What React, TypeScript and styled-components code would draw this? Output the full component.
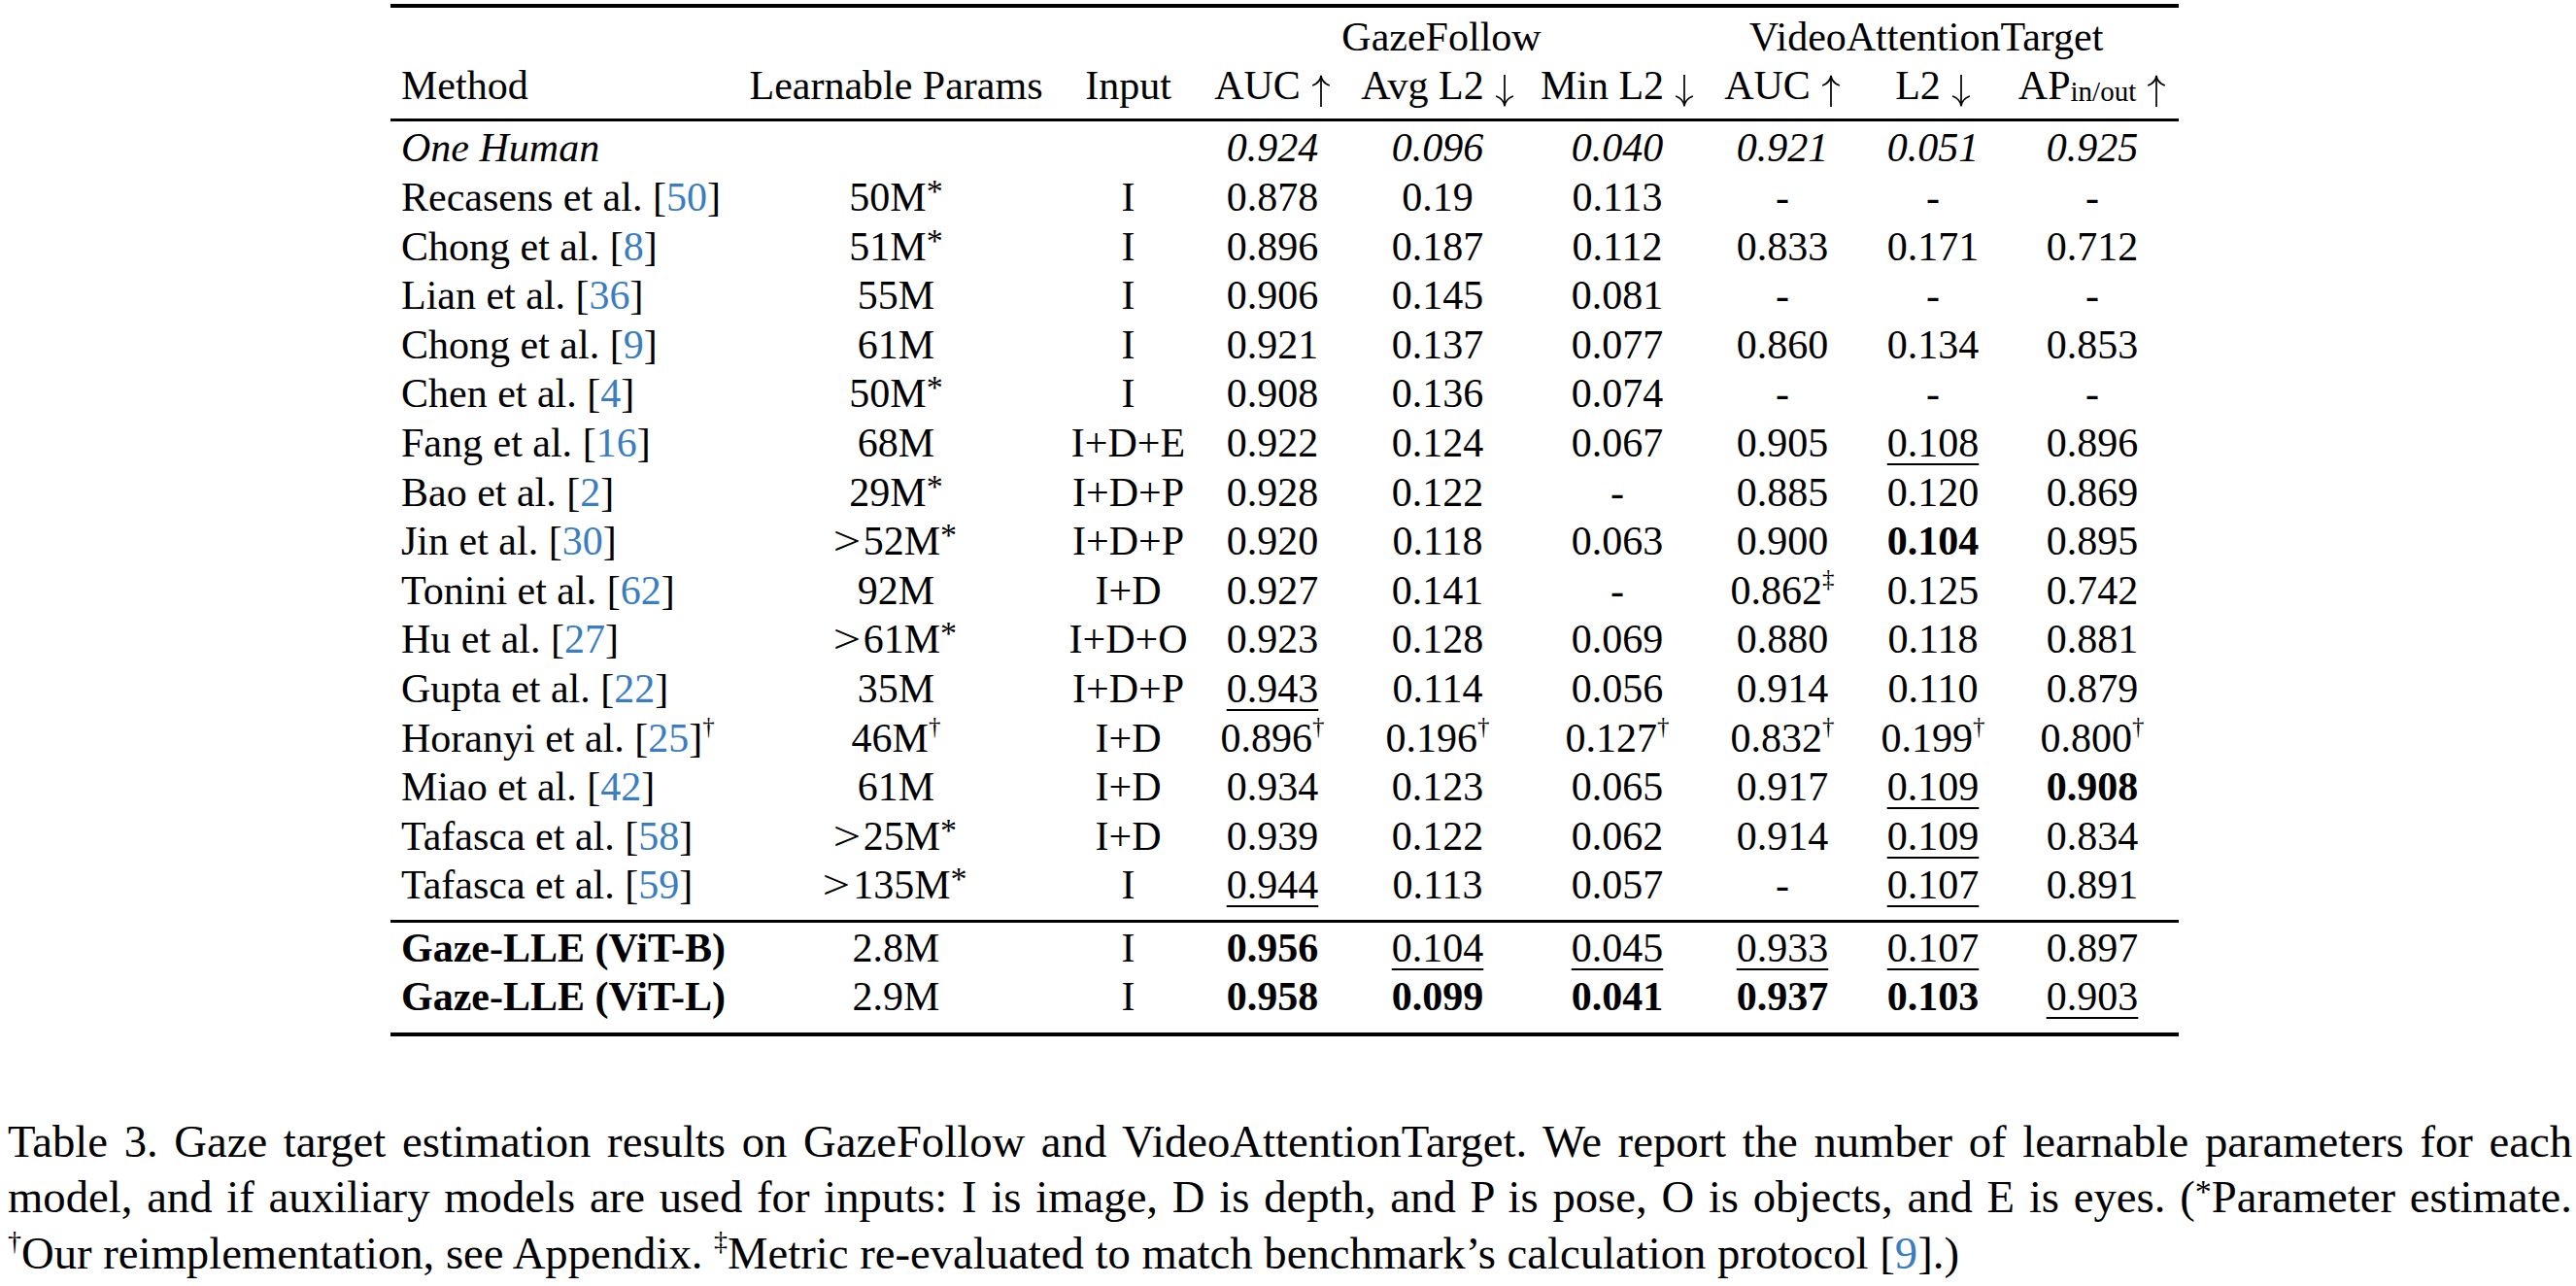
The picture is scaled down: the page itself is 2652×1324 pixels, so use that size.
import React from 'react';
import styled, { createGlobalStyle } from 'styled-components';

const GlobalStyle = createGlobalStyle`
  html, body {
    margin: 0;
    padding: 0;
    background: #ffffff;
  }
  body {
    font-family: "Liberation Serif", "Times New Roman", serif;
    color: #000000;
    overflow: hidden;
  }
`;

const Page = styled.div`
  width: 2652px;
  box-sizing: border-box;
  padding: 4px 0 0 8px;
`;

const Table = styled.table`
  margin-left: 394px;
  width: 1841px;
  table-layout: fixed;
  border-collapse: separate;
  border-spacing: 0;
  font-size: 42px;
  line-height: 50.6px;
`;

type Edge = { ruleTop?: number; padTop?: number; padBottom?: number; ruleBottom?: number };

const Cell = styled.td<{ $left?: boolean; $edge?: Edge; $italic?: boolean; $bold?: boolean; $shift?: number }>`
  padding: ${({ $edge }) => $edge?.padTop ?? 0}px ${({ $shift }) => $shift ?? 0}px
    ${({ $edge }) => $edge?.padBottom ?? 0}px ${({ $left }) => ($left ? 11 : 0)}px;
  text-align: ${({ $left }) => ($left ? 'left' : 'center')};
  vertical-align: top;
  white-space: nowrap;
  border-top: ${({ $edge }) => ($edge?.ruleTop ? `${$edge.ruleTop}px solid #000` : 'none')};
  border-bottom: ${({ $edge }) => ($edge?.ruleBottom ? `${$edge.ruleBottom}px solid #000` : 'none')};
  font-style: ${({ $italic }) => ($italic ? 'italic' : 'normal')};
  font-weight: ${({ $bold }) => ($bold ? 700 : 400)};
`;

const Cite = styled.span`
  color: #3a7dc0;
`;

const Sup = styled.span<{ $size?: number; $raise?: number }>`
  font-size: ${({ $size }) => $size ?? 26}px;
  vertical-align: ${({ $raise }) => $raise ?? 17}px;
  line-height: 0;
  font-weight: 400;
  font-style: normal;
`;

const Sub = styled.span`
  font-size: 29px;
  vertical-align: -2px;
  line-height: 0;
`;

// the math arrows (\uparrow, \downarrow): thin stem, curved barbs, dropping below the baseline
const ArrowSvg = styled.svg<{ $down?: boolean }>`
  display: inline-block;
  width: 20px;
  height: 33px;
  margin-left: 11px;
  vertical-align: -8px;
  transform: ${({ $down }) => ($down ? 'scaleY(-1)' : 'none')};
`;

const Arrow = ({ down }: { down?: boolean }) => (
  <ArrowSvg $down={down} viewBox="0 0 20 33" fill="none" stroke="#000" strokeWidth={1.7} strokeLinecap="round">
    <path d="M10 1.5 V33" />
    <path d="M10 1.5 C9.2 5.5 6.2 9 1.8 10.8" />
    <path d="M10 1.5 C10.8 5.5 13.8 9 18.2 10.8" />
  </ArrowSvg>
);

const Gt = styled.span`
  display: inline-block;
  margin-right: 5px;
  transform: scaleX(1.2);
`;

const Under = styled.span`
  text-decoration: underline;
  text-decoration-thickness: 2px;
  text-underline-offset: 7px;
`;

const Strong = styled.span`
  font-weight: 700;
`;

const Caption = styled.div`
  margin-top: 80px;
  width: 2640px;
  font-size: 46.7px;
  line-height: 57.5px;
`;

const CaptionLine = styled.div<{ $last?: boolean }>`
  white-space: nowrap;
  text-align: ${({ $last }) => ($last ? 'left' : 'justify')};
  text-align-last: ${({ $last }) => ($last ? 'left' : 'justify')};
`;

const widths = [355, 331, 147, 150, 190, 180, 160, 150, 178];

type Method = { name: string; ref?: string; dagger?: boolean };
type Row = { method: Method; params: string; input: string; vals: string[] };

const rows: Row[] = [
  { method: { name: 'Recasens et al.', ref: '50' }, params: '50M*', input: 'I', vals: ['0.878', '0.19', '0.113', '-', '-', '-'] },
  { method: { name: 'Chong et al.', ref: '8' }, params: '51M*', input: 'I', vals: ['0.896', '0.187', '0.112', '0.833', '0.171', '0.712'] },
  { method: { name: 'Lian et al.', ref: '36' }, params: '55M', input: 'I', vals: ['0.906', '0.145', '0.081', '-', '-', '-'] },
  { method: { name: 'Chong et al.', ref: '9' }, params: '61M', input: 'I', vals: ['0.921', '0.137', '0.077', '0.860', '0.134', '0.853'] },
  { method: { name: 'Chen et al.', ref: '4' }, params: '50M*', input: 'I', vals: ['0.908', '0.136', '0.074', '-', '-', '-'] },
  { method: { name: 'Fang et al.', ref: '16' }, params: '68M', input: 'I+D+E', vals: ['0.922', '0.124', '0.067', '0.905', '_0.108', '0.896'] },
  { method: { name: 'Bao et al.', ref: '2' }, params: '29M*', input: 'I+D+P', vals: ['0.928', '0.122', '-', '0.885', '0.120', '0.869'] },
  { method: { name: 'Jin et al.', ref: '30' }, params: '>52M*', input: 'I+D+P', vals: ['0.920', '0.118', '0.063', '0.900', '!0.104', '0.895'] },
  { method: { name: 'Tonini et al.', ref: '62' }, params: '92M', input: 'I+D', vals: ['0.927', '0.141', '-', '0.862‡', '0.125', '0.742'] },
  { method: { name: 'Hu et al.', ref: '27' }, params: '>61M*', input: 'I+D+O', vals: ['0.923', '0.128', '0.069', '0.880', '0.118', '0.881'] },
  { method: { name: 'Gupta et al.', ref: '22' }, params: '35M', input: 'I+D+P', vals: ['_0.943', '0.114', '0.056', '0.914', '0.110', '0.879'] },
  { method: { name: 'Horanyi et al.', ref: '25', dagger: true }, params: '46M†', input: 'I+D', vals: ['0.896†', '0.196†', '0.127†', '0.832†', '0.199†', '0.800†'] },
  { method: { name: 'Miao et al.', ref: '42' }, params: '61M', input: 'I+D', vals: ['0.934', '0.123', '0.065', '0.917', '_0.109', '!0.908'] },
  { method: { name: 'Tafasca et al.', ref: '58' }, params: '>25M*', input: 'I+D', vals: ['0.939', '0.122', '0.062', '0.914', '_0.109', '0.834'] },
  { method: { name: 'Tafasca et al.', ref: '59' }, params: '>135M*', input: 'I', vals: ['_0.944', '0.113', '0.057', '-', '_0.107', '0.891'] },
];

const ours: Row[] = [
  { method: { name: 'Gaze-LLE (ViT-B)' }, params: '2.8M', input: 'I', vals: ['!0.956', '_0.104', '_0.045', '_0.933', '_0.107', '0.897'] },
  { method: { name: 'Gaze-LLE (ViT-L)' }, params: '2.9M', input: 'I', vals: ['!0.958', '!0.099', '!0.041', '!0.937', '!0.103', '_0.903'] },
];

const withMark = (s: string) => {
  const last = s.slice(-1);
  if (last === '†' || last === '‡') {
    return (
      <>
        {s.slice(0, -1)}
        <Sup $size={25} $raise={18}>{last}</Sup>
      </>
    );
  }
  if (last === '*') {
    return (
      <>
        {s.slice(0, -1)}
        <Sup $size={34} $raise={9}>*</Sup>
      </>
    );
  }
  return <>{s}</>;
};

const Value = ({ s }: { s: string }) => {
  if (s.startsWith('_')) return <Under>{withMark(s.slice(1))}</Under>;
  if (s.startsWith('!')) return <Strong>{withMark(s.slice(1))}</Strong>;
  return withMark(s);
};

const Params = ({ s }: { s: string }) =>
  s.startsWith('>') ? (
    <>
      <Gt>&gt;</Gt>
      {withMark(s.slice(1))}
    </>
  ) : (
    withMark(s)
  );

const MethodName = ({ m }: { m: Method }) => (
  <>
    {m.name}
    {m.ref && (
      <>
        {' ['}
        <Cite>{m.ref}</Cite>]
      </>
    )}
    {m.dagger && (
      <Sup $size={25} $raise={18}>
        †
      </Sup>
    )}
  </>
);

const DataRow = ({ row, edge, bold }: { row: Row; edge?: Edge; bold?: boolean }) => (
  <tr>
    <Cell $left $edge={edge} $bold={bold}>
      <MethodName m={row.method} />
    </Cell>
    <Cell $edge={edge}>
      <Params s={row.params} />
    </Cell>
    <Cell $edge={edge}>{row.input}</Cell>
    {row.vals.map((v, i) => (
      <Cell key={i} $edge={edge}>
        <Value s={v} />
      </Cell>
    ))}
  </tr>
);

export default function App() {
  const groupEdge: Edge = { ruleTop: 4, padTop: 4.5 };
  const headEdge: Edge = { padBottom: 8.3 };
  const lastBase = rows.length - 1;
  const human: Edge = { ruleTop: 3, padTop: 2.5 };

  return (
    <Page>
      <GlobalStyle />
      <Table>
        <colgroup>
          {widths.map((w, i) => (
            <col key={i} style={{ width: w }} />
          ))}
        </colgroup>
        <thead>
          <tr>
            <Cell $edge={groupEdge} />
            <Cell $edge={groupEdge} />
            <Cell $edge={groupEdge} />
            <Cell colSpan={3} $edge={groupEdge} $shift={22}>
              GazeFollow
            </Cell>
            <Cell colSpan={3} $edge={groupEdge} $shift={32}>
              VideoAttentionTarget
            </Cell>
          </tr>
          <tr>
            <Cell $left $edge={headEdge}>Method</Cell>
            <Cell $edge={headEdge}>Learnable Params</Cell>
            <Cell $edge={headEdge}>Input</Cell>
            <Cell $edge={headEdge}>
              AUC<Arrow />
            </Cell>
            <Cell $edge={headEdge}>
              Avg L2<Arrow down />
            </Cell>
            <Cell $edge={headEdge}>
              Min L2<Arrow down />
            </Cell>
            <Cell $edge={headEdge}>
              AUC<Arrow />
            </Cell>
            <Cell $edge={headEdge}>
              L2<Arrow down />
            </Cell>
            <Cell $edge={headEdge}>
              AP<Sub>in/out</Sub>
              <Arrow />
            </Cell>
          </tr>
        </thead>
        <tbody>
          <tr>
            <Cell $left $edge={human} $italic>
              One Human
            </Cell>
            <Cell $edge={human} />
            <Cell $edge={human} />
            {['0.924', '0.096', '0.040', '0.921', '0.051', '0.925'].map((v, i) => (
              <Cell key={i} $edge={human} $italic>
                {v}
              </Cell>
            ))}
          </tr>
          {rows.map((r, i) => (
            <DataRow key={i} row={r} edge={i === lastBase ? { padBottom: 9.6 } : undefined} />
          ))}
        </tbody>
        <tbody>
          <DataRow row={ours[0]} bold edge={{ ruleTop: 3, padTop: 1 }} />
          <DataRow row={ours[1]} bold edge={{ padBottom: 11, ruleBottom: 4 }} />
        </tbody>
      </Table>
      <Caption>
        <CaptionLine>
          Table 3. Gaze target estimation results on GazeFollow and VideoAttentionTarget. We report the number of
          learnable parameters for each
        </CaptionLine>
        <CaptionLine>
          model, and if auxiliary models are used for inputs: I is image, D is depth, and P is pose, O is objects, and E
          is eyes. (<Sup $size={34} $raise={10}>*</Sup>Parameter estimate.
        </CaptionLine>
        <CaptionLine $last>
          <Sup $size={28} $raise={19}>†</Sup>Our reimplementation, see Appendix.{' '}
          <Sup $size={28} $raise={19}>‡</Sup>Metric re-evaluated to match benchmark’s calculation protocol [
          <Cite>9</Cite>].)
        </CaptionLine>
      </Caption>
    </Page>
  );
}
